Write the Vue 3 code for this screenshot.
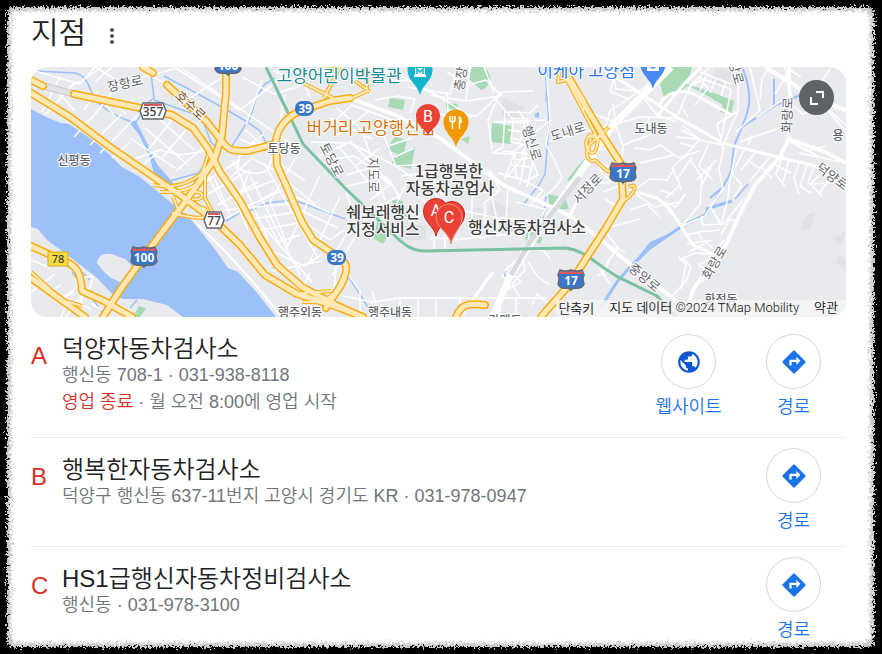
<script setup>
const places = [
  {
    letter: 'A',
    name: '덕양자동차검사소',
    address: '행신동 708-1 · 031-938-8118',
    status: '영업 종료',
    hours: ' · 월 오전 8:00에 영업 시작',
    website: true
  },
  { letter: 'B', name: '행복한자동차검사소', address: '덕양구 행신동 637-11번지 고양시 경기도 KR · 031-978-0947' },
  { letter: 'C', name: 'HS1급행신자동차정비검사소', address: '행신동 · 031-978-3100' }
]

const minorRoads = [
  'M95 67L120 82L160 73M120 82L96 113L74 137M160 73L176 68L240 110L296 67M180 67L300 150M140 69L190 98L224 76',
  'M60 77L42 112M80 82C65 85 60 105 45 114M80 82L102 67M31 70L80 84L95 67M84 110L98 91M90 145L122 114M100 153L139 114M112 158L130 142M105 103L115 117M118 107L126 114',
  'M126 162L160 150L180 155L205 151M130 138L175 168M145 128L188 165M158 118L194 150M148 150L172 120M162 158L186 130M176 171L205 146M136 171L157 153M112 67L95 82M60 94L75 111',
  'M228 180L252 158L274 170M236 195L275 180M243 208L281 191M225 210L288 204M246 220L296 212M252 232L303 222M250 176L300 275M266 166L318 258M233 160L268 240M222 170L248 230M214 178L230 214',
  'M238 168C236 146 262 134 274 152L268 170C260 175 248 174 238 168M240 139L262 149M245 130L268 149M249 145L264 134',
  'M262 80L246 125M242 77L274 94L300 86M285 95L280 120M296 67L310 97M274 71L303 84',
  'M277 162L305 181M282 177L318 207M292 195L330 213M300 210L338 228M307 224L330 240L344 230M300 150L270 202L288 247M320 175L286 250M340 197L308 265M366 218L332 276M346 193L356 218L335 253',
  'M250 170L240 195M265 215L278 242L300 235M262 225L312 282M270 250L304 266L321 255M272 271L322 261M293 285L322 302M310 273L300 294',
  'M336 267L334 294L372 302L400 298L546 298M345 270L360 291L360 317M372 291L380 317M400 298V317M418 298V317M436 298V317M460 298V317M500 298V317M516 298V317',
  'M325 130L352 105L392 120M330 118L372 139M337 108L362 130M311 142L350 143L396 166L430 164M319 156L352 141M328 160L354 156L391 181M340 148L380 196M352 143L393 187M362 130L385 200M378 121L396 166M346 175L370 168L390 185L370 200M342 187L374 180M357 165L380 148M337 136L370 110M388 146L412 138M395 157L414 148',
  'M360 67L400 75L445 100L472 118M372 67L377 79L429 82M408 87L450 94L458 67M430 95L466 101L500 96M430 110L468 124M447 92L448 112L476 116M466 101L470 67M410 113L415 99L398 96L375 100M447 72L468 85L486 80L502 96M484 67L494 93M476 117L502 92L533 91M500 92L488 120L492 149M492 96L505 110L503 147L492 153L515 154L516 177L543 190L530 205M494 122L546 120M505 112L530 113L538 105M510 118L528 119L526 142L510 154',
  'M396 166L420 183L418 197L430 205L413 221L398 214M401 176L431 172M390 181L399 196L382 205M406 184L393 211M419 183L441 199M430 172L447 205M379 202L404 221L394 231M459 181L472 195L493 190L480 180M490 170L500 190L482 205M492 197L500 235M508 187L506 220M516 202L545 209L538 228M460 210L493 217L535 221M472 195V235M485 205V231M463 190L500 191M455 240L542 230M430 238L458 239M445 225V249M434 223V249',
  'M507 112L513 120L511 142L526 145L521 160L506 178M519 111L525 121L520 143M507 122L524 123M508 130L528 132M510 138L526 141M503 151L528 154M511 165L529 167M498 173L520 179M514 155L504 180M526 151L520 184M534 155L527 187M515 160L531 158L538 175L525 181',
  'M546 67L550 121L531 135M550 121L546 145L556 163L562 178L553 190L539 200M550 141L588 131L609 126L640 117M605 129L610 111L628 99L645 87L665 67M600 67L613 74L616 89L638 91L657 115L675 122M613 104L616 125L623 146L621 172M628 99L610 91L616 71L603 69M640 117L680 118M648 117L652 134L623 145M591 153L614 145M594 161L617 170M587 111L612 121M592 128L602 150',
  'M596 157L602 174L614 183M587 185L617 181M618 186L603 192M605 199L616 206L605 224M637 188L650 179L667 180L674 169M637 195L655 207L678 202M630 210L647 204L660 217M620 201L633 196M607 228L640 219M640 163L674 155M635 148L650 150L660 145L679 158L699 151',
  'M675 122L690 86L710 67M690 87L701 80L708 88L695 105M697 77L731 89M700 72L731 84M706 76L700 91M716 78L710 93M726 81L721 96M683 108L688 117M682 125L700 140L723 145L738 111L738 77M731 90L720 145M738 111L717 124L722 145L723 149',
  'M750 68L756 93L760 110L736 132M770 67L762 78L760 99M775 94L790 70L801 77M785 67L790 95L775 105L756 118M740 142L762 134L780 128M751 135L748 145M792 102L786 119L789 142L780 157M789 103L803 114L821 107M831 67L820 84M824 106L846 125M828 111L846 132',
  'M681 130L700 139L685 156L672 168L680 185L666 198M700 139L676 137M695 147L680 143M692 157L678 178L681 190M708 145L699 166L713 180M690 160L702 177L700 204L682 226M712 165L702 185M716 160L697 180M724 147L719 169L723 190L710 206L721 225M736 150L730 180L728 198L721 225M744 150L732 174L742 185L734 197M755 153L741 170M747 160L759 168',
  'M770 157L750 181M760 166L772 178M789 160L783 182M775 165L791 173M799 164L794 178L799 194M807 165L800 186L811 193M814 168L808 182L822 196M820 174L811 184L830 183M829 179L819 194M791 142L807 151L826 146M799 153L840 162M804 148L819 157M783 155L776 174L785 187',
  'M660 190L674 195M662 201L676 207L685 194M667 210L680 221M682 226L705 216L724 187M701 216L703 225L724 224L742 201M684 235L706 231M687 244L713 240M689 252L704 244L698 232L720 230M679 260L695 253L711 254M704 240L717 252M711 257L698 266M683 258L691 267L686 281L671 297M679 257L686 265L681 289M698 263L705 270L703 282M713 254L724 240M730 219L721 235M727 220L734 220',
  'M591 260L607 268L598 276M615 249L602 275M607 234L618 248L606 264M600 269L610 284M611 246L625 252M550 259L543 250L528 250M528 262L538 277L550 285M520 248L525 270L512 284L520 298M507 269L521 282L501 293M502 274L510 287M532 305L537 294L550 305M530 231L525 255L505 270M507 268L523 255',
  'M80 296L66 317M78 285L60 303M77 303L91 309M82 291L75 279L93 276L90 288L80 294M31 292L55 274M31 281L44 284M31 260L49 267M49 292L61 285M56 300L74 292M91 303L105 312M61 317L67 302M200 185L240 160M208 194L248 171M218 205L258 182M227 218L275 192M205 171L225 207M218 163L240 200'
]

const streams = [
  'M36 71L75 73C90 77 88 90 98 103C110 113 122 119 130 121',
  'M151 73L154 98L145 105L137 121L129 124M154 100L205 118M204 124L211 142L220 151',
  'M164 76C190 90 240 115 260 131L272 154M265 84L256 98L251 116L232 146M265 84L275 78M170 181L198 173L212 158',
  'M245 213L267 203L294 200L345 219M347 274L371 312',
  'M545 67L549 125L545 174L539 185L523 205M548 67L546 101M546 196L543 220M505 273L504 290L501 305',
  'M226 221L262 199M72 272L106 317M81 271L90 280M130 308L137 300M735 199L748 184'
]

const highways = [
  'M31 93L70 117L110 147L183 197L214 220L240 245L265 275L297 294L332 305L363 317',
  'M31 80L43 86M74 94L140 108L172 115L193 128L207 147L220 172L240 201L260 238L277 265L302 287L338 306L362 317',
  'M226 67L226 92L222 135L215 158L197 185L185 202L160 235L140 262L120 290L103 317',
  'M167 85L207 122L221 140C229 151 232 151 247 151L275 144',
  'M276 143C276 130 286 117 300 111L330 101L350 98M276 143L277 165L289 192L302 222L313 240L334 254L345 263C349 270 343 284 333 297L326 308',
  'M563 67L580 97L605 139L621 164L623 199L606 228L587 257L570 284L547 310L541 317',
  'M143 67L153 73M31 246L55 257C75 264 81 269 82 291L104 301L132 317M31 278L60 299L85 317M456 317C461 304 469 303 485 305'
]

const ramps = [
  'M153 185C178 190 199 180 210 164M160 192C191 193 204 184 205 164M173 197L180 214M185 202L205 209C216 224 184 216 172 213M190 192C207 190 205 201 192 199M205 168L205 198L214 215M208 155L199 182',
  'M300 296C326 305 337 296 342 278M292 294L331 291M302 302C330 302 344 302 337 309L320 301',
  'M340 67L324 98M366 67L367 91L350 99M337 70L324 67M303 83L335 99M370 92L355 81',
  'M560 67L558 82L567 80L599 141M573 82L585 101L583 111M609 127L590 144C583 155 590 164 595 160L607 171L621 173M591 134C579 145 593 160 596 149C600 139 594 130 589 138M629 187C639 181 635 195 623 201M605 137L590 137',
  'M80 275L71 265M31 272L50 289M82 306L62 300'
]

const greens = [
  'M390 98L405 100L403 110L388 107ZM395 136L407 141L404 151L415 147L411 169L391 164L397 154L387 149ZM446 103L458 104L456 110L446 108ZM472 67L485 67C495 79 489 87 481 90L469 79ZM492 123L513 126L511 144L491 142ZM392 199L403 201L407 219L394 221ZM457 210L465 211L464 221L455 220ZM377 222L390 232L383 244L374 239ZM586 158L575 184L567 180L577 167ZM548 194L565 198L569 209L550 210ZM660 83L669 67L692 67L687 84L717 94L734 101L731 115L720 112L723 105L699 91L687 86L680 92L664 98ZM139 306L146 308L140 317L133 317ZM461 139L470 136L468 144ZM525 237L543 237L540 244ZM530 225L537 230L530 245L525 239Z'
]

const waters = [
  'M31 109L48 118L61 123L69 124L94 141L110 155L122 167L140 177L157 191L180 210L190 218L214 248L228 268L238 272L258 294L276 317L183 317L167 305L143 299L123 299L113 295L97 278L83 267L62 251L47 240L38 229L31 227Z',
  'M128 121L136 121L148 145L157 164L173 183L183 196L174 193L155 178L149 155L138 133Z',
  'M670 233L649 248L641 259L631 267L641 253L650 242ZM535 114L539 112L539 118L535 117Z'
]

const districts = [
  { x: 74, y: 165, text: '신평동' },
  { x: 284, y: 153, text: '토당동' },
  { x: 651, y: 133, text: '도내동' },
  { x: 300, y: 317, text: '행주외동' },
  { x: 390, y: 317, text: '행주내동' },
  { x: 505, y: 325, text: '강매동' },
  { x: 721, y: 304, text: '화정동' },
  { x: 838, y: 140, text: '용' }
]

const streets = [
  { x: 125, y: 84, a: -12, text: '장항로' },
  { x: 190, y: 106, a: 44, text: '호수로', tone: 'brown' },
  { x: 331, y: 160, a: 63, text: '토당로' },
  { x: 373, y: 175, a: 90, text: '지도로' },
  { x: 462, y: 73, a: -82, text: '충장로' },
  { x: 531, y: 143, a: 72, text: '행신로' },
  { x: 568, y: 132, a: -18, text: '도내로' },
  { x: 588, y: 189, a: -46, text: '서정로' },
  { x: 734, y: 67, a: 74, text: '중앙로' },
  { x: 788, y: 115, a: -88, text: '화랑로' },
  { x: 832, y: 177, a: 36, text: '덕양로' },
  { x: 644, y: 278, a: 40, text: '중앙로' },
  { x: 715, y: 263, a: -60, text: '화랑로' }
]

const shields = [
  { x: 144, y: 257, text: '100' },
  { x: 228, y: 65, text: '100' },
  { x: 623, y: 173, text: '17' },
  { x: 571, y: 280, text: '17' }
]
const pinPath = 'M0 25C-2 15-12.5 11-12.5 0A12.5 12.5 0 1 1 12.5 0C12.5 11 2 15 0 25Z'
</script>

<template>
  <main class="page">
    <svg class="defs" aria-hidden="true">
      <filter id="torn" x="-3%" y="-3%" width="106%" height="106%">
        <feTurbulence type="fractalNoise" baseFrequency="0.45" numOctaves="3" seed="4" />
        <feDisplacementMap in="SourceGraphic" scale="11" xChannelSelector="R" yChannelSelector="G" />
      </filter>
    </svg>
    <div class="paper">
      <header class="heading">
        <h1>지점</h1>
        <button class="more" type="button" aria-label="옵션">
          <svg width="6" height="18" viewBox="0 0 6 18"><g fill="#4d5156"><circle cx="3" cy="3" r="2" /><circle cx="3" cy="9" r="2" /><circle cx="3" cy="15" r="2" /></g></svg>
        </button>
      </header>

      <section class="map" aria-label="지도">
        <svg class="canvas" viewBox="31 67 815 250" preserveAspectRatio="xMidYMid slice">
          <rect x="-500" y="67" width="2000" height="250" fill="#e8eaed" />
          <path fill="#e0e2e6" d="M492 200L510 208L505 220L487 216ZM470 208H483V222H470ZM497 222H515V234H497ZM716 67L733 72L728 88L711 84ZM806 215L815 212L810 231L801 229ZM833 238L846 231L842 246ZM840 255L846 260V271L835 262ZM405 225H426V240H405ZM502 98L524 107L520 120L502 117Z" />
          <path v-for="d in greens" :key="d" :d="d" fill="#a8dab5" />
          <path v-for="d in waters" :key="d" :d="d" fill="#9cc0f9" />
          <path d="M97 263C98 255 105 252 114 255L125 259L132 266L128 281L122 283L111 278L103 271Z" fill="#e8eaed" />
          <g fill="none" stroke="#9cc0f9" stroke-width="1.5">
            <path v-for="d in streams" :key="d" :d="d" />
            <path d="M742 67C755 98 748 112 742 127L734 146L731 172L723 187L710 198M742 127L776 105L803 94M774 105V79" stroke-width="2" />
            <path d="M722 190L705 215L682 226L650 248M706 209L732 201" stroke-width="3" />
            <path d="M650 248L630 267L617 282L601 307" stroke-width="3" />
          </g>
          <g fill="none" stroke="#fff" stroke-width="1.5" stroke-linejoin="round">
            <path v-for="d in minorRoads" :key="d" :d="d" />
          </g>
          <g fill="none" stroke="#fff" stroke-width="4" stroke-linejoin="round">
            <path d="M350 98L395 115L440 138L472 162L505 186L545 204L572 217L600 239L637 270L680 304" />
            <path d="M190 217L226 252L252 281L282 317" stroke-width="2" />
            <path d="M600 67L640 93L680 119L700 130L722 143L778 157L815 166L846 186M658 115L685 83L701 67M660 104C668 88 690 90 699 97L732 115" stroke-width="3" />
            <path d="M765 67L796 86L810 97L846 110M789 67V85L791 103M789 138L780 157L755 185L742 210L720 257L707 270L693 290L690 300M788 139L825 152L846 163" />
            <path d="M630 190L657 198L670 209L693 245L722 258M82 292L79 317M460 317L493 272M570 215L586 185" stroke-width="3" />
          </g>
          <path d="M568 190L614 124L656 82L671 67M567 191L533 240L509 278L493 317" fill="none" stroke="#fff" stroke-width="7" />
          <path d="M580 177L530 242L511 275" fill="none" stroke="#d8dadd" stroke-width="5" />
          <path d="M43 86L74 94" stroke="#c8cace" stroke-width="7" />
          <path d="M43 86L74 94" stroke="#dfe1e4" stroke-width="5" />
          <path d="M266 67L303 144L345 188L391 232C406 247 413 251 425 251L565 248C585 250 594 263 618 277L657 296L679 320" fill="none" stroke="#7ac2a0" stroke-width="3" />
          <g fill="none" stroke="#f9ab13" stroke-width="4" stroke-linejoin="round"><path v-for="d in ramps" :key="d" :d="d" /></g>
          <g fill="none" stroke="#f9ab13" stroke-width="8" stroke-linejoin="round" stroke-linecap="round"><path v-for="d in highways" :key="d" :d="d" /></g>
          <g fill="none" stroke="#fee9b5" stroke-width="2" stroke-linejoin="round"><path v-for="d in ramps" :key="d" :d="d" /></g>
          <g fill="none" stroke="#fee9b5" stroke-width="5" stroke-linejoin="round" stroke-linecap="round"><path v-for="d in highways" :key="d" :d="d" /></g>

          <g v-for="s in shields" :key="s.x" :transform="`translate(${s.x} ${s.y})`">
            <path d="M-11-10Q-6-8 0-10Q6-8 11-10L13-5Q11-1 13 4Q11 9 5 8Q1 8 0 10Q-1 8-5 8Q-11 9-13 4Q-11-1-13-5Z" fill="#3a76c8" stroke="#626870" stroke-width="1.5" />
            <path d="M-11-9Q-6-7 0-9Q6-7 11-9L12-6H-12Z" fill="#d75c60" />
            <text y="5" class="route light">{{ s.text }}</text>
          </g>
          <g v-for="r in [{ x: 153, y: 111, t: '357', w: 13 }, { x: 214, y: 220, t: '77', w: 10 }]" :key="r.t" :transform="`translate(${r.x} ${r.y})`">
            <path :d="`M${-r.w + 3}-8H${r.w - 3}L${r.w} 0L${r.w - 3} 8H${-r.w + 3}L${-r.w} 0Z`" fill="#fff" stroke="#626870" stroke-width="1.5" />
            <path :d="`M${-r.w + 4}-7H${r.w - 4}V-5H${-r.w + 4}Z`" fill="#d75c60" />
            <text y="5" class="route">{{ r.t }}</text>
          </g>
          <rect x="48" y="252" width="20" height="14" fill="#fadb3e" stroke="#cfae28" />
          <text x="58" y="263" class="route small">78</text>
          <g v-for="r in [{ x: 305, y: 108 }, { x: 337, y: 257 }]" :key="r.x" :transform="`translate(${r.x} ${r.y})`">
            <rect x="-10" y="-7" width="19" height="15" rx="7" fill="#3a76c8" />
            <text y="5" class="route light">39</text>
          </g>

          <text v-for="p in districts" :key="p.text" :x="p.x" :y="p.y" class="label district">{{ p.text }}</text>
          <text v-for="s in streets" :key="s.x" :transform="`translate(${s.x} ${s.y}) rotate(${s.a})`" y="4" class="label street" :class="s.tone">{{ s.text }}</text>

          <text x="339" y="82" class="label poi teal">고양어린이박물관</text>
          <text x="586" y="77" class="label poi blue">이케아 고양점</text>
          <text x="371" y="134" class="label poi orange">버거리 고양행신점</text>

          <g transform="translate(420 70)">
            <path :d="pinPath" fill="#12b5cb" />
            <path d="M-6-4L0-7L6-4V-3H-6ZM-5-2H5V5H-5ZM-6 5H6V7H-6Z" fill="#fff" />
            <path d="M-3 4V-1L0 2L3-1V4" fill="none" stroke="#12b5cb" stroke-width="1.5" />
          </g>
          <g transform="translate(653 64)">
            <path :d="pinPath" fill="#4a89f3" />
            <path d="M-6-1H6V7H-6Z" fill="#fff" />
            <path d="M-3 0Q-3 4 0 4Q3 4 3 0" fill="none" stroke="#4a89f3" stroke-width="1.5" />
          </g>
          <g transform="translate(456 122)">
            <path :d="pinPath" fill="#f29900" />
            <path d="M-6-6V-2Q-6 0-3.5 0Q-1 0-1-2V-6M-3.5-6V7M3.5 7V-5" fill="none" stroke="#fff" stroke-width="1.5" />
            <path d="M3-6Q6-5 6 1H3Z" fill="#fff" />
          </g>

          <text x="449" y="177" class="label business">1급행복한</text>
          <text x="450" y="194" class="label business">자동차공업사</text>
          <text x="383" y="218" class="label business">쉐보레행신</text>
          <text x="383" y="235" class="label business">지정서비스</text>
          <text x="527" y="233" class="label business">행신자동차검사소</text>

          <g transform="translate(428 116)">
            <path d="M0 20C-2 13-12 10-12 0A12 12 0 1 1 12 0C12 10 2 13 0 20Z" fill="#ea4335" />
            <text y="6" class="pin-letter">B</text>
          </g>
          <g transform="translate(436 211)">
            <path :d="pinPath" fill="#ea4335" stroke="#c5221f" />
            <text y="5" class="pin-letter">A</text>
          </g>
          <g transform="translate(452 214)"><path :d="pinPath" fill="#ea4335" stroke="#c5221f" /></g>
          <g transform="translate(449 217)">
            <path d="M2 27C1 16-13 11-13 0A13 13 0 1 1 13 0C13 11 4 16 2 27Z" fill="#ea4335" stroke="#f28b82" />
            <text y="6" class="pin-letter">C</text>
          </g>
        </svg>
        <button class="expand" type="button" aria-label="지도 확대">
          <svg width="14" height="14" viewBox="0 0 14 14"><path d="M6 1H13V7M1 6V13H8" fill="none" stroke="#fff" stroke-width="2" /></svg>
        </button>
        <footer class="credits">
          <button type="button">단축키</button>
          <span>지도 데이터 ©2024 TMap Mobility</span>
          <a href="#terms">약관</a>
        </footer>
      </section>

      <article v-for="p in places" :key="p.letter" class="place" :class="{ detailed: p.hours }">
        <span class="letter">{{ p.letter }}</span>
        <div class="info">
          <h2>{{ p.name }}</h2>
          <p>{{ p.address }}</p>
          <p v-if="p.hours"><span class="closed">{{ p.status }}</span>{{ p.hours }}</p>
        </div>
        <a v-if="p.website" class="action" href="#website">
          <span class="ring">
            <svg width="26" height="26" viewBox="0 0 24 24"><path fill="#0b57d0" d="M12 2C6.480 2 2 6.480 2 12s4.480 10 10 10 10-4.480 10-10S17.520 2 12 2zm-1 17.930c-3.950-.49-7-3.850-7-7.930 0-.62.080-1.210.21-1.790L9 15v1c0 1.100.9 2 2 2v1.930zm6.900-2.540c-.26-.81-1-1.390-1.900-1.390h-1v-3c0-.55-.45-1-1-1H8v-2h2c.55 0 1-.45 1-1V7h2c1.100 0 2-.9 2-2v-.41c2.930 1.190 5 4.060 5 7.410 0 2.080-.8 3.970-2.100 5.390z" /></svg>
          </span>
          웹사이트
        </a>
        <a class="action" href="#directions">
          <span class="ring">
            <svg width="28" height="28" viewBox="0 0 24 24"><path fill="#1a73e8" d="M21.710 11.290l-9-9a.996.996 0 0 0-1.410 0l-9 9a.996.996 0 0 0 0 1.410l9 9c.39.39 1.020.39 1.410 0l9-9a.996.996 0 0 0 0-1.410zM14 14.500V12h-4v3H8v-4c0-.55.45-1 1-1h5V7.500l3.500 3.500-3.500 3.500z" /></svg>
          </span>
          경로
        </a>
      </article>
    </div>
  </main>
</template>

<style>
body {
  margin: 0;
  background: #000;
}
</style>

<style scoped>
.page {
  box-sizing: border-box;
  min-height: 100vh;
  position: relative;
  isolation: isolate;
  padding: 8px 36px 8px 31px;
  font-family: "Liberation Sans", "Noto Sans CJK KR", sans-serif;
  color: #202124;
}
.page::before,
.page::after {
  content: "";
  position: absolute;
  z-index: -1;
  inset: 7px 8px 7px 7px;
  background: #c9c9c9;
  border-radius: 6px;
  filter: url(#torn);
}
.page::after {
  inset: 12px 13px 12px 12px;
  background: #fff;
  box-shadow: 0 0 3px 1px #fff;
}
.defs {
  position: absolute;
  width: 0;
  height: 0;
}
.heading {
  display: flex;
  align-items: center;
  height: 50px;
  gap: 18px;
  margin-bottom: 9px;
}
h1, h2, p {
  margin: 0;
  font-weight: 350;
}
h1 {
  font-size: 30px;
  line-height: 50px;
}
button {
  font: inherit;
  color: inherit;
  border: 0;
  padding: 0;
  background: none;
}
.more {
  display: flex;
  padding: 6px 5px 0;
}
.map {
  position: relative;
  height: 250px;
  border-radius: 16px;
  overflow: hidden;
  margin-bottom: 7px;
}
.canvas {
  display: block;
  width: 100%;
  height: 100%;
}
text {
  font-family: "Noto Sans", "Noto Sans CJK KR", sans-serif;
  text-anchor: middle;
}
.label {
  paint-order: stroke;
  stroke: #fff;
  stroke-width: 2px;
  stroke-linejoin: round;
  font-family: "Noto Sans CJK KR", sans-serif;
  font-weight: 500;
}
.district {
  font-size: 12px;
  fill: #5f6368;
}
.street {
  font-size: 13px;
  font-weight: 400;
  fill: #5f6368;
}
.brown {
  fill: #80501e;
}
.poi {
  font-size: 17px;
  font-weight: 400;
}
.teal {
  fill: #178a94;
}
.blue {
  fill: #2875e8;
}
.orange {
  fill: #d5730d;
}
.business {
  font-size: 16px;
  fill: #3c3c3c;
}
.route {
  font-size: 12px;
  font-weight: 500;
  fill: #3c4043;
}
.light {
  font-weight: 700;
  fill: #fff;
}
.small {
  font-size: 11px;
}
.pin-letter {
  font-family: Roboto, sans-serif;
  font-size: 16px;
  fill: #fff;
}
.expand {
  position: absolute;
  top: 13px;
  right: 12px;
  width: 35px;
  height: 35px;
  border-radius: 50%;
  background: #5f6368;
  display: grid;
  place-items: center;
}
.credits {
  position: absolute;
  right: 0;
  bottom: 0;
  display: flex;
  gap: 15px;
  height: 17px;
  padding: 0 8px 0 2px;
  background: rgba(245, 245, 245, 0.8);
  font-family: Roboto, "Noto Sans CJK KR", sans-serif;
  font-size: 13px;
  font-weight: 350;
  line-height: 15px;
  color: #111;
}
.credits a {
  color: inherit;
  text-decoration: none;
}
.place {
  display: flex;
  align-items: flex-start;
  padding: 10px 0 13px;
  border-bottom: 1px solid #e8eaed;
}
.place:last-child {
  border-bottom: 0;
  padding-bottom: 0;
}
.detailed {
  padding-bottom: 18px;
}
.letter {
  width: 31px;
  padding-top: 15px;
  font-size: 24px;
  line-height: 27px;
  color: #d93025;
}
.info {
  flex: 1;
  padding-top: 8px;
}
.detailed .letter {
  padding-top: 8px;
}
.detailed .info {
  padding-top: 1px;
}
h2 {
  font-size: 24px;
  line-height: 27px;
}
p {
  font-size: 18px;
  line-height: 27px;
  color: #70757a;
}
.closed {
  color: #d93025;
}
.action {
  display: flex;
  flex-direction: column;
  align-items: center;
  gap: 6px;
  width: 105px;
  font-size: 18px;
  font-weight: 350;
  line-height: 24px;
  color: #1a73e8;
  text-decoration: none;
}
.ring {
  box-sizing: border-box;
  width: 55px;
  height: 55px;
  border: 1px solid #d2d4d7;
  border-radius: 50%;
  display: grid;
  place-items: center;
}
</style>
